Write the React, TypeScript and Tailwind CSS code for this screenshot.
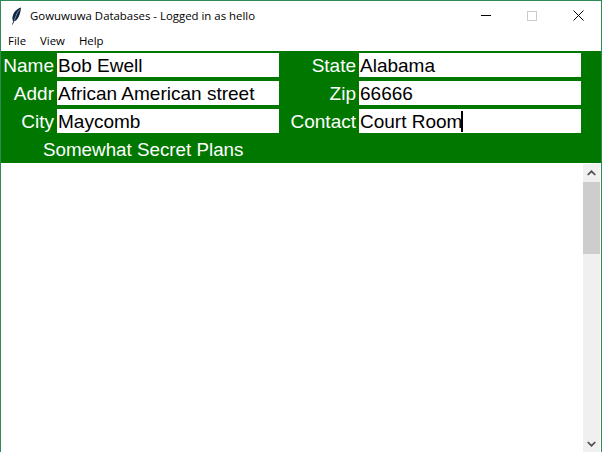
function Field({ label, value, caret }: { label: string; value: string; caret?: boolean }) {
  return (
    <div className="flex items-center h-6">
      <span className="flex-1 text-right text-white pr-[3px] pt-[1px]">{label}</span>
      <div className="w-[222px] h-6 bg-white text-black pl-[1px] pt-[1px] flex items-center">
        <span>{value}</span>
        {caret && <span className="w-[2px] h-[21px] bg-black -ml-[1px] -mt-[1px]" />}
      </div>
    </div>
  );
}

function ScrollBar() {
  return (
    <div className="w-[17px] mr-[1px] ml-[2px] bg-[#f0f0f0] flex flex-col items-stretch">
      <div className="h-[17px] flex items-center justify-center">
        <svg width="9" height="6" viewBox="0 0 9 6" fill="none" stroke="#505050" strokeWidth="1.7">
          <path d="M0.7 5L4.5 1.3L8.3 5" />
        </svg>
      </div>
      <div className="flex-1">
        <div className="mt-[1px] h-[72px] bg-[#cdcdcd]" />
      </div>
      <div className="h-[17px] flex items-center justify-center">
        <svg width="9" height="6" viewBox="0 0 9 6" fill="none" stroke="#505050" strokeWidth="1.7">
          <path d="M0.7 1L4.5 4.7L8.3 1" />
        </svg>
      </div>
    </div>
  );
}

export default function App() {
  return (
    <div className="w-[602px] h-[452px] border border-[#2e8b57] border-b-0 bg-white flex flex-col font-['Liberation_Sans',sans-serif] overflow-hidden">
      {/* title bar */}
      <div className="h-[29px] flex items-center font-['Open_Sans',sans-serif] text-[11.4px] text-black">
        <svg className="ml-[10px] mr-[8px]" width="11" height="18" viewBox="0 0 11 18">
          <path d="M10 0.5C6 1.5 2.5 5 1.5 10C1.2 12 1.6 13.4 2.4 14L1 17.5L1.8 17.5L3.2 14.3C7 13.5 9.5 7 10 0.5Z" fill="#14233f" />
          <path d="M8.6 2.5C6.5 5 5 8 3.4 13.4" stroke="#8fa4c8" strokeWidth="0.8" fill="none" />
        </svg>
        <span>Gowuwuwa Databases - Logged in as hello</span>
        <div className="ml-auto flex items-center">
          <div className="w-[46px] flex justify-center">
            <div className="w-[10px] h-[1px] bg-black" />
          </div>
          <div className="w-[46px] flex justify-center">
            <div className="w-[10px] h-[10px] border border-[#cccccc]" />
          </div>
          <div className="w-[46px] flex justify-center">
            <svg width="11" height="11" viewBox="0 0 11 11" stroke="#000" strokeWidth="1" fill="none">
              <path d="M0.5 0.5L10.5 10.5M10.5 0.5L0.5 10.5" />
            </svg>
          </div>
        </div>
      </div>

      {/* menu bar */}
      <div className="h-[21px] flex items-center gap-[14px] pl-[7px] font-['Open_Sans',sans-serif] text-[11.4px] text-black">
        <span>File</span>
        <span>View</span>
        <span>Help</span>
      </div>

      {/* form */}
      <div className="h-[112px] -mx-[1px] bg-[#007800] pt-[2px] text-[19px] leading-6">
        <div className="grid grid-cols-[279px_302px] gap-y-1">
          <Field label="Name" value="Bob Ewell" />
          <Field label="State" value="Alabama" />
          <Field label="Addr" value="African American street" />
          <Field label="Zip" value="66666" />
          <Field label="City" value="Maycomb" />
          <Field label="Contact" value="Court Room" caret />
        </div>
        <div className="mt-1 pl-[43px] pt-[1px] text-[18.8px] text-white">Somewhat Secret Plans</div>
      </div>

      {/* text area */}
      <div className="flex-1 flex justify-end min-h-0 pt-[1px]">
        <ScrollBar />
      </div>
    </div>
  );
}
